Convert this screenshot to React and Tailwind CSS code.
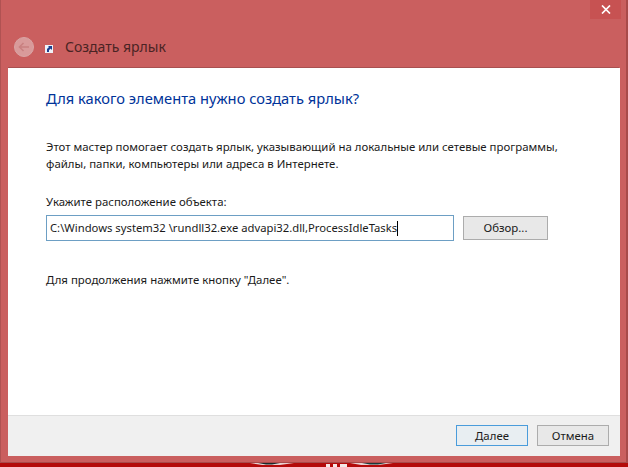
export default function App() {
  return (
    <div className="w-[628px] h-[467px] overflow-hidden flex flex-col bg-[#b40a0a] text-[11.42px] text-[#1a1a1a] font-['Noto_Sans',sans-serif]">
      <div className="h-[463px] w-[628px] shrink-0 flex flex-col bg-[#ca5f5f] border-l border-r-2 border-b border-[#a84a4a] border-l-[#b05252]">
        <div className="h-[68px] shrink-0 flex flex-col border-b border-[#a85050] mx-[7px] relative">
          <div className="absolute right-[-2px] top-0 w-[31px] h-[19px] bg-[#c75252] flex items-center justify-center">
            <svg width="10" height="9" viewBox="0 0 10 9"><path d="M1 .5l8 8M9 .5l-8 8" stroke="#fff" strokeWidth="1.7" /></svg>
          </div>
          <div className="mt-[37px] flex items-center ml-[6px]">
            <div className="w-[20px] h-[20px] rounded-full bg-[#d99a9a] border border-[#d9a5a5] flex items-center justify-center">
              <svg width="12" height="10" viewBox="0 0 12 10"><path d="M5.5 1L1.5 5l4 4M1.5 5H11" fill="none" stroke="#c98080" strokeWidth="1.6" /></svg>
            </div>
            <svg className="ml-[11px] mt-[3px]" width="8" height="8" viewBox="0 0 8 8"><rect width="8" height="8" fill="#eef2f8" /><path d="M2 7V4l2-2H3l1-1 3 0v3l-1 1V3.5L4 5v2z" fill="#1b3f8f" /></svg>
            <span className="ml-[12px] text-[14px] leading-[20px] text-[#4a2424]">Создать ярлык</span>
          </div>
        </div>
        <div className="mx-[7px] w-[612px] h-[388px] flex flex-col">
          <div className="h-[347px] bg-white flex flex-col pl-[38px]">
            <h1 className="mt-[20px] text-[14.7px] leading-[20px] font-normal text-[#003399]">Для какого элемента нужно создать ярлык?</h1>
            <p className="mt-[30px] leading-[17px] w-[530px]">Этот мастер помогает создать ярлык, указывающий на локальные или сетевые программы, файлы, папки, компьютеры или адреса в Интернете.</p>
            <label className="mt-[22px] leading-[16px]">Укажите расположение объекта:</label>
            <div className="mt-[5px] flex items-start">
              <div className="w-[408px] h-[26px] border border-[#6d9fc4] flex items-center pl-[3px] text-[11.28px]">
                <span>C:\Windows system32 \rundll32.exe advapi32.dll,ProcessIdleTasks</span>
                <span className="w-px h-[15px] bg-black" />
              </div>
              <button className="ml-[9px] mt-[1px] w-[85px] h-[24px] border border-[#acacac] bg-[#e8e8e8]">Обзор...</button>
            </div>
            <p className="mt-[30px] leading-[18px]">Для продолжения нажмите кнопку "Далее".</p>
          </div>
          <div className="flex-1 bg-[#f0f0f0] border-t border-[#dfdfdf] flex items-start justify-end pt-[9px] pr-[11px] gap-[9px]">
            <button className="w-[72px] h-[21px] border border-[#4a9cdb] bg-[#e8eef2] leading-[18px]">Далее</button>
            <button className="w-[72px] h-[21px] border border-[#acacac] bg-[#e8e8e8] leading-[18px]">Отмена</button>
          </div>
        </div>
      </div>
      <div className="flex-1 bg-[#b40a0a]">
        <svg width="628" height="4" viewBox="0 0 628 4">
          <path d="M250 0h44l-14 2h-18z" fill="#e8d0d0" />
          <path d="M258 0h22l-8 1.5h-6z" fill="#1a2a2a" />
          <path d="M326 1h4v3h-4zM333 1h4v3h-4zM340 1h7v3h-7z" fill="#f4e8e8" />
          <path d="M350 0h43l-14 2h-18z" fill="#e8d0d0" />
          <path d="M362 0h24l-8 1.5h-8z" fill="#1a3a3a" />
        </svg>
      </div>
    </div>
  );
}
